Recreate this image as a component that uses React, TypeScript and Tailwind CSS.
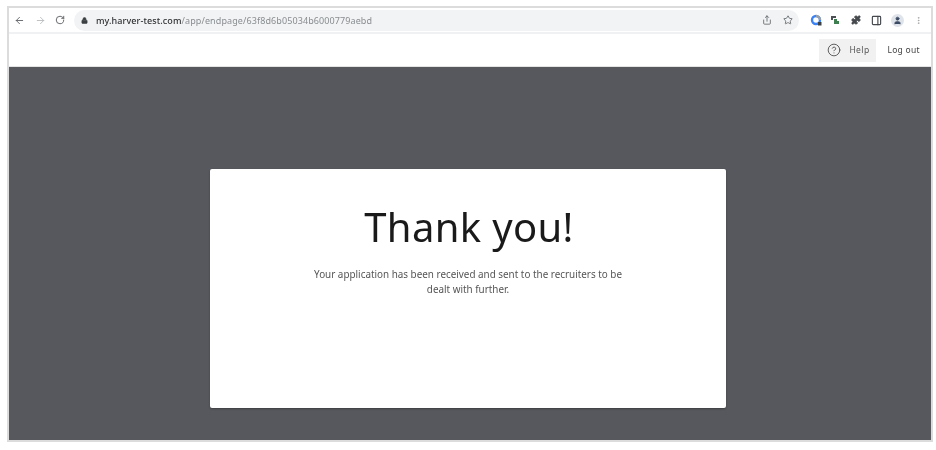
import { ArrowLeft, ArrowRight, RotateCw, Lock, Share, Star, Puzzle, PanelRight, User, EllipsisVertical, CircleHelp } from "lucide-react";

const App = () => {
  return (
    <div className="w-[936px] h-[450px] bg-white pt-[6px] pl-[7px] overflow-hidden blur-[0.5px]" style={{ fontFamily: '"Noto Sans", sans-serif' }}>
      <div className="w-[926px] h-[436px] border-2 border-[#dcdcdc] flex flex-col bg-white">
        {/* Browser toolbar */}
        <div className="h-[26px] shrink-0 border-b-2 border-[#f0f1f3] flex items-center pl-[5px] pr-[8px]">
          <ArrowLeft className="w-[11px] h-[11px] text-[#5f6368] mr-[10px]" />
          <ArrowRight className="w-[11px] h-[11px] text-[#b9bcc0] mr-[9px]" />
          <RotateCw className="w-[10px] h-[10px] text-[#4c4f53] mr-[9px]" />
          <div className="w-[727px] h-[21px] bg-[#f1f3f4] rounded-full flex items-center pl-[7px] pr-[6px]">
            <Lock className="w-[7px] h-[7px] text-[#3c4043] mr-[8px]" fill="#3c4043" />
            <span className="text-[9px] tracking-[0.1px] leading-none text-[#8a8d91] whitespace-nowrap">
              <span className="text-[#303134] font-medium">my.harver-test.com</span>/app/endpage/63f8d6b05034b6000779aebd
            </span>
            <div className="ml-auto flex items-center gap-[11px]">
              <Share className="w-[10px] h-[10px] text-[#5f6368]" />
              <Star className="w-[10px] h-[10px] text-[#5f6368]" />
            </div>
          </div>
          <div className="flex items-center ml-[11px]">
            <svg viewBox="0 0 12 12" className="w-[12px] h-[12px] mr-[8px]">
              <circle cx="6" cy="6" r="4" fill="none" stroke="#3b82f6" strokeWidth="2.4" />
              <path d="M6 2a4 4 0 0 1 4 4" fill="none" stroke="#9aa0a6" strokeWidth="2.4" />
              <rect x="8" y="8" width="3.5" height="3.5" fill="#3c4043" />
            </svg>
            <svg viewBox="0 0 10 10" className="w-[10px] h-[10px] mr-[11px]">
              <path d="M1 1h5v2H3v2H1z" fill="#4d5156" />
              <path d="M4 4h3v2h2v3H4z" fill="#3f7f4f" />
            </svg>
            <Puzzle className="w-[10px] h-[10px] text-[#45484c] mr-[10px]" fill="#45484c" />
            <PanelRight className="w-[11px] h-[11px] text-[#45484c] mr-[9px]" strokeWidth={2.5} />
            <div className="w-[13px] h-[13px] rounded-full bg-[#dfe3ea] flex items-center justify-center mr-[10px]">
              <User className="w-[9px] h-[9px] text-[#3b4a63]" fill="#3b4a63" />
            </div>
            <EllipsisVertical className="w-[9px] h-[9px] text-[#9a9da1]" />
          </div>
        </div>

        {/* App header */}
        <div className="h-[33px] shrink-0 flex items-center justify-end pr-[11px] border-b border-[#e4e4e4]">
          <div className="h-[23px] w-[57px] bg-[#f1f1f1] flex items-center pl-[8px] gap-[8px] mr-[11px]">
            <CircleHelp className="w-[14px] h-[14px] text-[#4a4a4a]" strokeWidth={1.5} />
            <span className="text-[8.5px] tracking-[0.4px] text-[#555]">Help</span>
          </div>
          <span className="text-[8.5px] tracking-[0.3px] text-[#444]">Log out</span>
        </div>

        {/* Page */}
        <div className="flex-1 bg-[#57585d] flex justify-center pt-[102px] pr-[5px]">
          <div className="w-[516px] h-[239px] bg-white rounded-[2px] shadow-[0_1px_2px_rgba(0,0,0,0.3)] flex flex-col items-center pt-[33px]">
            <h1 className="text-[40px] leading-[50px] ml-[3px] text-[#1a1a1a] tracking-[0.35px]">Thank you!</h1>
            <p className="w-[322px] mt-[15px] ml-[1px] text-[9.9px] leading-[15px] text-center text-[#555]">
              Your application has been received and sent to the recruiters to be dealt with further.
            </p>
          </div>
        </div>
      </div>
    </div>
  );
};

export default App;
